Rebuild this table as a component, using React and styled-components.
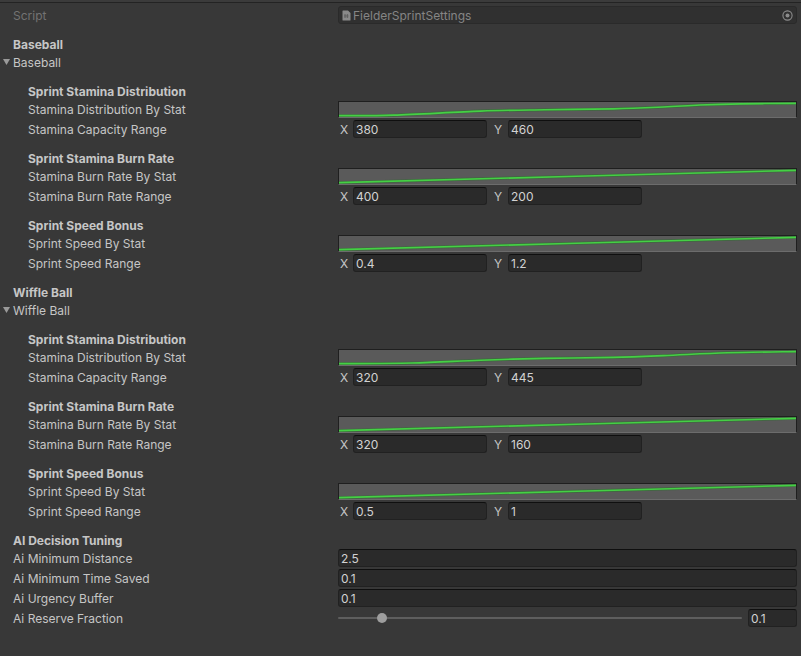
import React from "react";
import styled, { createGlobalStyle } from "styled-components";

const GlobalStyle = createGlobalStyle`
  html, body { margin: 0; padding: 0; background: #383838; }
  body {
    font-family: Inter, "Noto Sans", sans-serif;
    font-size: 12px;
    color: #c4c4c4;
    -webkit-font-smoothing: antialiased;
  }
`;

const Inspector = styled.div`
  width: 801px;
  height: 656px;
  background: #383838;
  overflow: hidden;
  display: flex;
  flex-direction: column;
`;

const TopRule = styled.div`
  flex: none;
  height: 2px;
  background: #3b3b3b;
  border-bottom: 1px solid #232323;
`;

const Row = styled.div`
  flex: none;
  display: flex;
  align-items: center;
  height: 18px;
  margin-top: ${(p) => p.$gap || 0}px;
`;

const Label = styled.div`
  flex: 0 0 338px;
  align-self: stretch;
  box-sizing: border-box;
  padding-top: 2px;
  padding-left: ${(p) => (p.$indent ? 28 : 13)}px;
  font-weight: ${(p) => (p.$bold ? 700 : 400)};
  color: ${(p) => (p.$dim ? "#737373" : "#c6c6c6")};
  white-space: nowrap;
  line-height: 16px;
`;

const FoldLabel = styled.div`
  flex: 0 0 338px;
  align-self: stretch;
  box-sizing: border-box;
  padding: 2px 0 0 3px;
  line-height: 16px;
  display: flex;
  align-items: center;
  color: #c6c6c6;
  white-space: nowrap;
`;

const Arrow = styled.span`
  flex: none;
  width: 10px;
  display: flex;
  align-items: center;
  margin-top: -2px;
`;

const Value = styled.div`
  flex: 1;
  min-width: 0;
  height: 100%;
  display: flex;
  align-items: center;
  padding-right: 4px;
`;

const Field = styled.div`
  box-sizing: border-box;
  height: 18px;
  flex: ${(p) => (p.$w ? "none" : "1")};
  width: ${(p) => (p.$w ? `${p.$w}px` : "auto")};
  background: #2a2a2a;
  border: 1px solid #212121;
  border-top-color: #0f0f0f;
  border-radius: 3px;
  padding: 2px 2px 0;
  line-height: 14px;
  color: #d2d2d2;
  white-space: nowrap;
  overflow: hidden;
`;

const ScriptField = styled.div`
  box-sizing: border-box;
  flex: 1;
  height: 18px;
  background: #303030;
  border: 1px solid #2a2a2a;
  border-radius: 3px;
  padding: 0 3px;
  display: flex;
  align-items: center;
  gap: 2px;
  color: #858585;
`;

const ScriptName = styled.span`
  flex: 1;
  white-space: nowrap;
  padding-top: 2px;
  line-height: 14px;
`;

const AxisLabel = styled.span`
  flex: none;
  box-sizing: border-box;
  width: ${(p) => p.$w}px;
  padding-left: ${(p) => p.$pl}px;
  padding-top: 2px;
  line-height: 14px;
  color: #c6c6c6;
`;

const CurveBox = styled.div`
  flex: 1;
  align-self: flex-end;
  box-sizing: border-box;
  height: 17px;
  background: #5a5a5a;
  border: 1px solid #1f1f1f;
  border-bottom-color: #6c6c6c;
  overflow: hidden;
`;

const CurveSvg = styled.svg`
  display: block;
  width: 100%;
  height: 100%;
`;

const SliderTrack = styled.div`
  flex: 1;
  height: 2px;
  background: #5e5e5e;
  border-radius: 1px;
  position: relative;
  margin-right: 6px;
`;

const Thumb = styled.div`
  position: absolute;
  top: 50%;
  width: 10px;
  height: 10px;
  border-radius: 50%;
  background: #9e9e9e;
  transform: translate(-50%, -50%);
`;

function smoothPath(pts) {
  const P = pts.map(([x, y]) => [x * 100, 0.09 + y * 0.82]);
  const f = (n) => n.toFixed(3);
  let d = `M${f(P[0][0])},${f(P[0][1])}`;
  for (let i = 0; i < P.length - 1; i++) {
    const p0 = P[i - 1] || P[i];
    const p1 = P[i];
    const p2 = P[i + 1];
    const p3 = P[i + 2] || p2;
    const c1 = [p1[0] + (p2[0] - p0[0]) / 6, p1[1] + (p2[1] - p0[1]) / 6];
    const c2 = [p2[0] - (p3[0] - p1[0]) / 6, p2[1] - (p3[1] - p1[1]) / 6];
    d += ` C${f(c1[0])},${f(c1[1])} ${f(c2[0])},${f(c2[1])} ${f(p2[0])},${f(p2[1])}`;
  }
  return d;
}

const CURVES = {
  distBase: [
    [0, 1], [0.12, 0.96], [0.31, 0.63], [0.45, 0.52], [0.6, 0.45],
    [0.71, 0.3], [0.79, 0.14], [0.88, 0.04], [1, 0],
  ],
  distWiffle: [
    [0, 1], [0.16, 0.95], [0.31, 0.72], [0.45, 0.57], [0.6, 0.49],
    [0.71, 0.35], [0.85, 0.12], [1, 0.02],
  ],
  linear: [[0, 1], [1, 0]],
};

function Curve({ points }) {
  const d = smoothPath(points);
  return (
    <CurveBox>
      <CurveSvg viewBox="0 0 100 1" preserveAspectRatio="none">
        <path
          d={d}
          fill="none"
          stroke="#1f7a1f"
          strokeOpacity="0.5"
          strokeWidth="3"
          vectorEffect="non-scaling-stroke"
        />
        <path
          d={d}
          fill="none"
          stroke="#45d045"
          strokeWidth="1.6"
          vectorEffect="non-scaling-stroke"
        />
      </CurveSvg>
    </CurveBox>
  );
}

function Vector2({ x, y }) {
  return (
    <>
      <AxisLabel $w={15} $pl={2}>X</AxisLabel>
      <Field $w={134}>{x}</Field>
      <AxisLabel $w={21} $pl={7}>Y</AxisLabel>
      <Field $w={134}>{y}</Field>
    </>
  );
}

function FoldArrow() {
  return (
    <Arrow>
      <svg width="7" height="6" viewBox="0 0 7 6">
        <path d="M0,0 L7,0 L3.5,6 Z" fill="#9a9a9a" />
      </svg>
    </Arrow>
  );
}

function ScriptIcon() {
  return (
    <svg width="9" height="11" viewBox="0 0 9 11" style={{ flex: "none" }}>
      <path d="M1,0.5 H6 L8.5,3 V10 a0.5,0.5 0 0 1 -0.5,0.5 H1 a0.5,0.5 0 0 1 -0.5,-0.5 V1 a0.5,0.5 0 0 1 0.5,-0.5 Z" fill="#8a8a8a" />
      <path d="M3,4 V8 M5.5,4 V8 M2.2,5.3 H6.5 M2.2,6.8 H6.5" stroke="#5a5a5a" strokeWidth="0.7" />
    </svg>
  );
}

function PickerIcon() {
  return (
    <svg width="11" height="11" viewBox="0 0 11 11" style={{ flex: "none" }}>
      <circle cx="5.5" cy="5.5" r="4.6" fill="none" stroke="#8c8c8c" strokeWidth="1.1" />
      <circle cx="5.5" cy="5.5" r="2" fill="#8c8c8c" />
    </svg>
  );
}

function SettingGroup({ title, curveLabel, rangeLabel, curve, x, y }) {
  return (
    <>
      <Row $gap={11}>
        <Label $indent $bold>{title}</Label>
      </Row>
      <Row>
        <Label $indent>{curveLabel}</Label>
        <Value>
          <Curve points={curve} />
        </Value>
      </Row>
      <Row $gap={2}>
        <Label $indent>{rangeLabel}</Label>
        <Value>
          <Vector2 x={x} y={y} />
        </Value>
      </Row>
    </>
  );
}

function Block({ name, data }) {
  return (
    <>
      <Row $gap={11}>
        <Label $bold>{name}</Label>
      </Row>
      <Row>
        <FoldLabel>
          <FoldArrow />
          {name}
        </FoldLabel>
      </Row>
      <SettingGroup
        title="Sprint Stamina Distribution"
        curveLabel="Stamina Distribution By Stat"
        rangeLabel="Stamina Capacity Range"
        curve={data.dist}
        x={data.cap[0]}
        y={data.cap[1]}
      />
      <SettingGroup
        title="Sprint Stamina Burn Rate"
        curveLabel="Stamina Burn Rate By Stat"
        rangeLabel="Stamina Burn Rate Range"
        curve={CURVES.linear}
        x={data.burn[0]}
        y={data.burn[1]}
      />
      <SettingGroup
        title="Sprint Speed Bonus"
        curveLabel="Sprint Speed By Stat"
        rangeLabel="Sprint Speed Range"
        curve={CURVES.linear}
        x={data.speed[0]}
        y={data.speed[1]}
      />
    </>
  );
}

const BASEBALL = { dist: CURVES.distBase, cap: ["380", "460"], burn: ["400", "200"], speed: ["0.4", "1.2"] };
const WIFFLE = { dist: CURVES.distWiffle, cap: ["320", "445"], burn: ["320", "160"], speed: ["0.5", "1"] };

export default function App() {
  const reserve = 0.1;
  return (
    <>
      <GlobalStyle />
      <Inspector>
        <TopRule />
        <Row $gap={3}>
          <Label $dim>Script</Label>
          <Value>
            <ScriptField>
              <ScriptIcon />
              <ScriptName>FielderSprintSettings</ScriptName>
              <PickerIcon />
            </ScriptField>
          </Value>
        </Row>
        <Block name="Baseball" data={BASEBALL} />
        <Block name="Wiffle Ball" data={WIFFLE} />
        <Row $gap={11}>
          <Label $bold>AI Decision Tuning</Label>
        </Row>
        <Row>
          <Label>Ai Minimum Distance</Label>
          <Value><Field>2.5</Field></Value>
        </Row>
        <Row $gap={2}>
          <Label>Ai Minimum Time Saved</Label>
          <Value><Field>0.1</Field></Value>
        </Row>
        <Row $gap={2}>
          <Label>Ai Urgency Buffer</Label>
          <Value><Field>0.1</Field></Value>
        </Row>
        <Row $gap={2}>
          <Label>Ai Reserve Fraction</Label>
          <Value>
            <SliderTrack>
              <Thumb style={{ left: `calc(5px + ${reserve} * (100% - 10px))` }} />
            </SliderTrack>
            <Field $w={49}>0.1</Field>
          </Value>
        </Row>
      </Inspector>
    </>
  );
}
